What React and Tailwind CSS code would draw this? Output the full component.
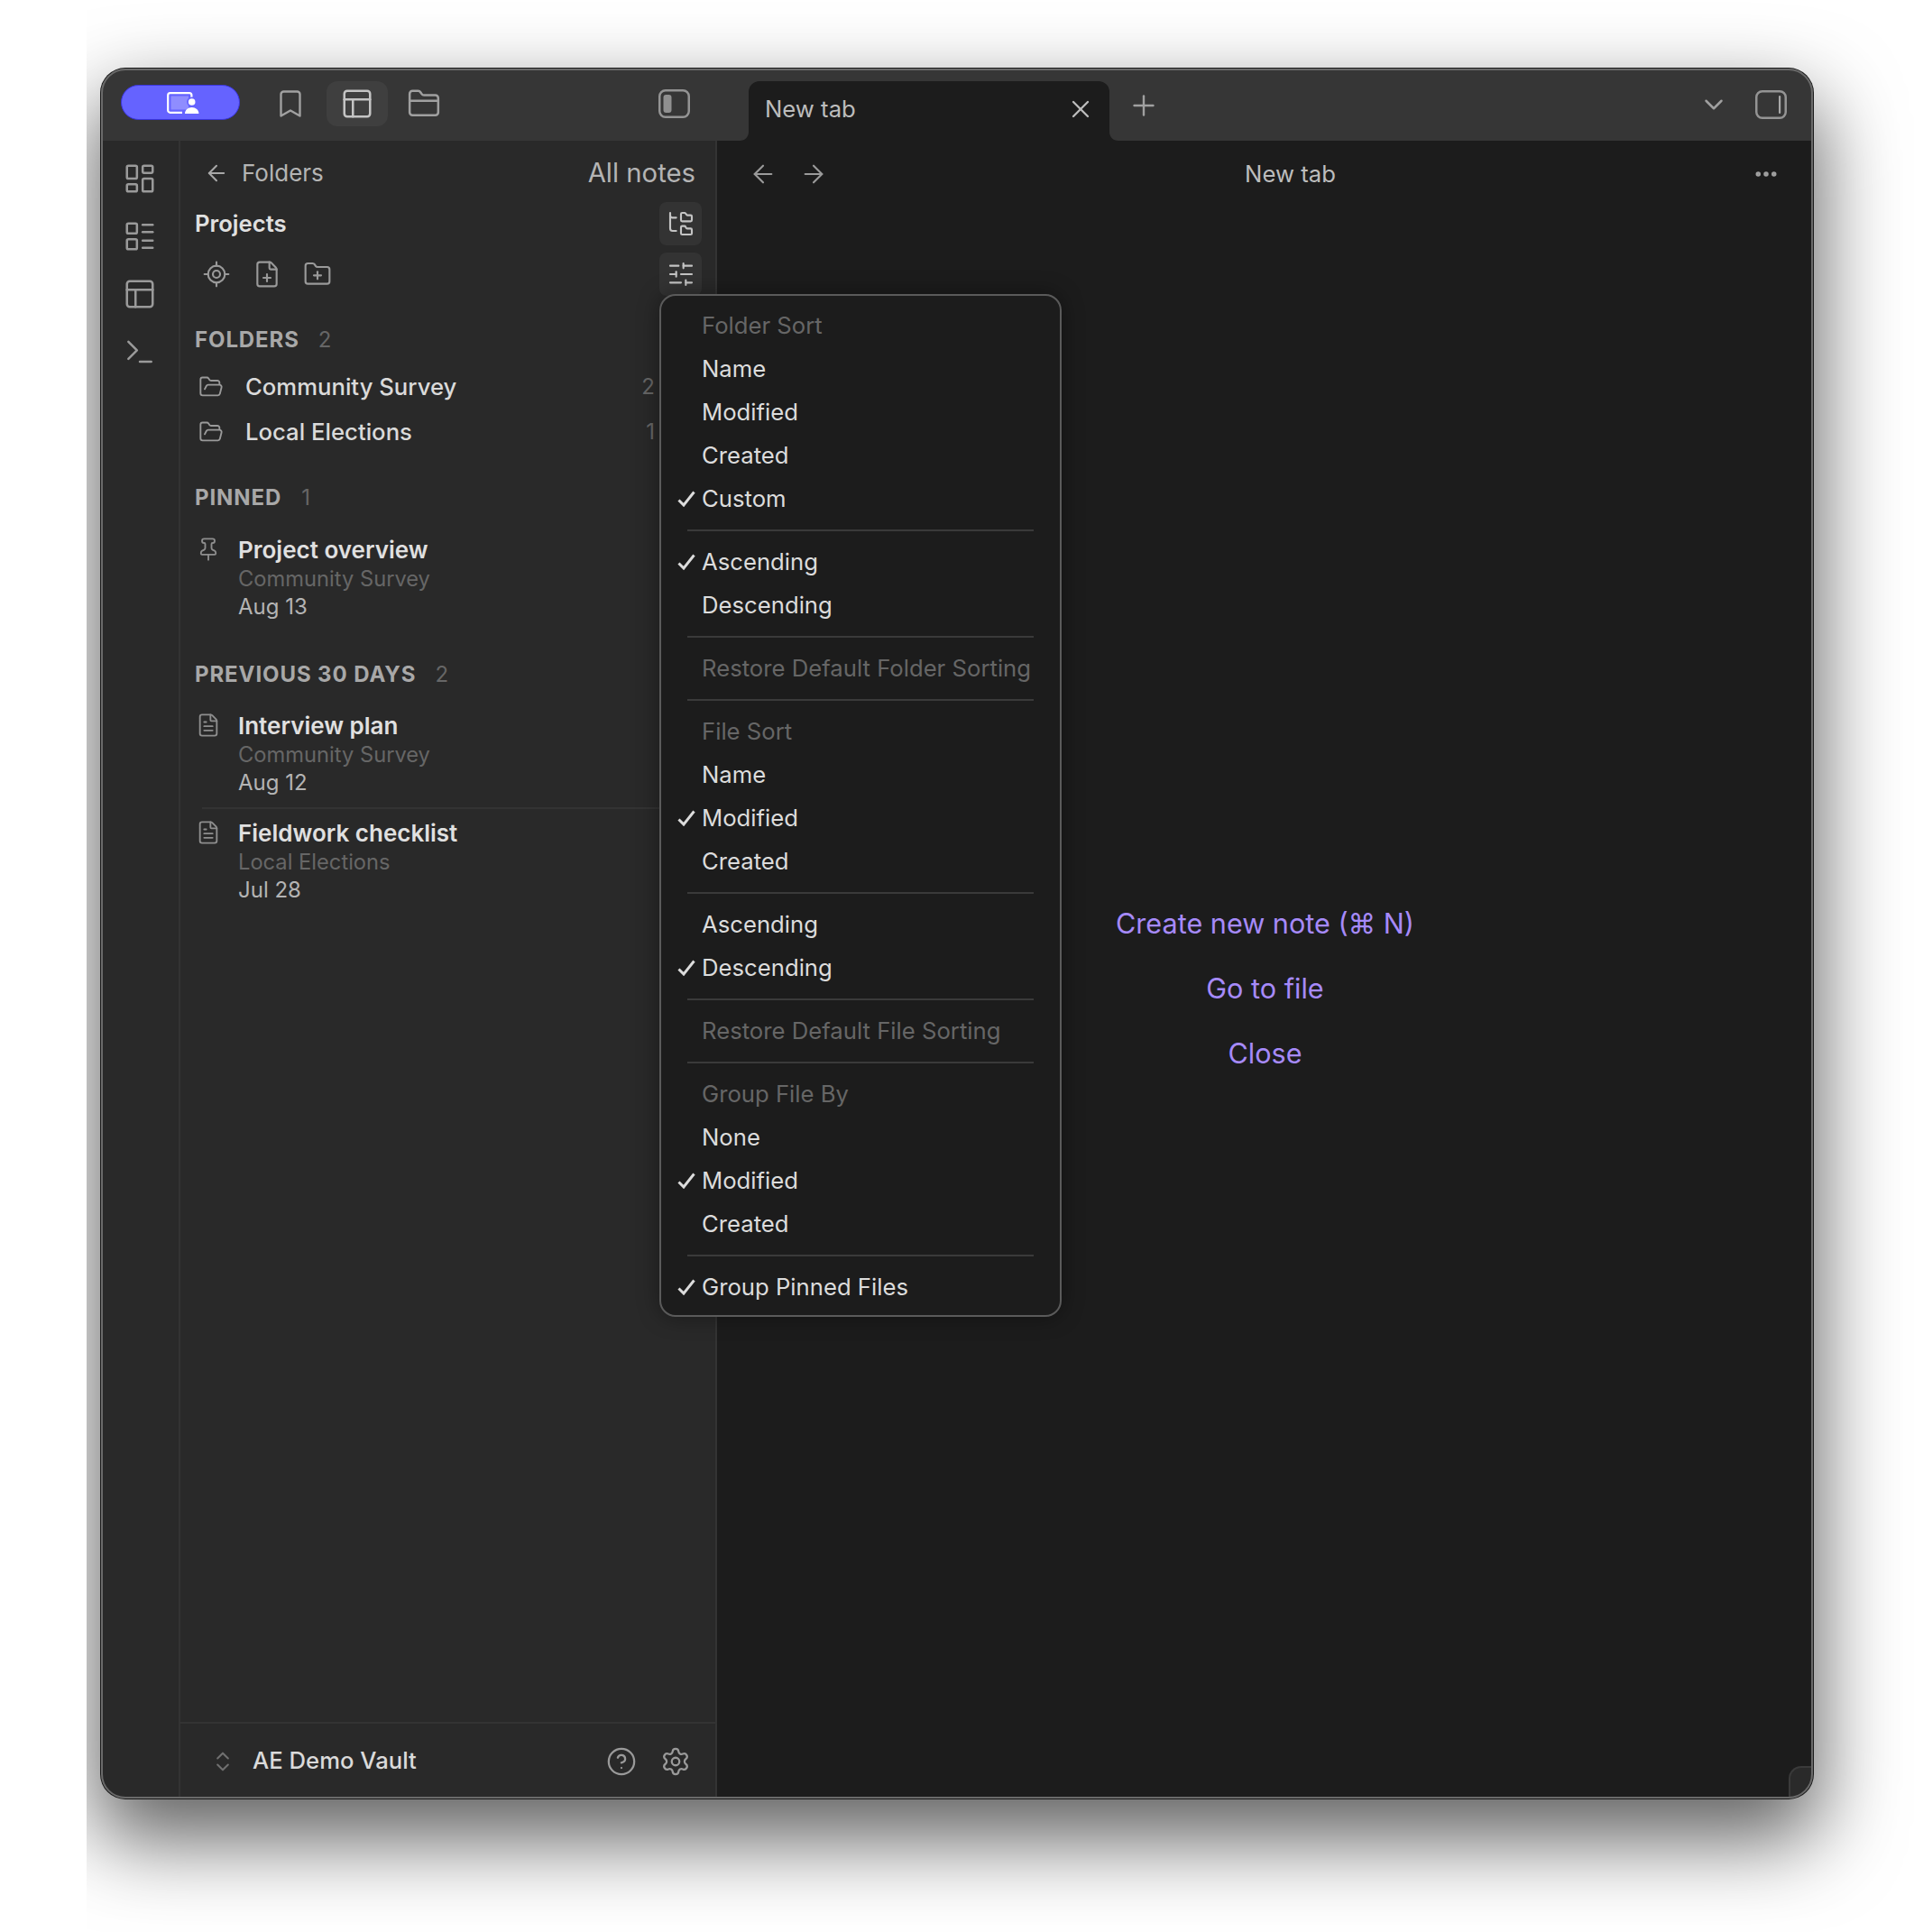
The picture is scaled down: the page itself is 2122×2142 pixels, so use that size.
import React from "react";
import {
  LayoutDashboard, LayoutList, PanelsTopLeft, Terminal, Bookmark, FolderClosed, ArrowLeft, ArrowRight,
  FolderTree, SlidersHorizontal, LocateFixed, FilePlus, FolderPlus, FolderOpen, Pin, FileText,
  ChevronsUpDown, CircleHelp, Settings, X, Plus, ChevronDown, Ellipsis,
} from "lucide-react";

const Sep = () => <div className="mx-[29px] my-[10px] h-[2px] bg-[#3a3a3a]" />;

function Row({ label, checked, muted }) {
  return (
    <div className={`relative flex h-[48px] items-center pl-[45px] text-[25.7px] ${muted ? "text-[#666666]" : "text-[#dcdcdc]"}`}>
      {checked && (
        <svg viewBox="0 0 20 18" className="absolute left-[18px] top-[15px] h-[18px] w-[20px]" fill="none">
          <path d="M1.5 10.5L7 16L18.5 1.5" stroke="#dcdcdc" strokeWidth="3" />
        </svg>
      )}
      {label}
    </div>
  );
}

function SectionLabel({ label, count, mt, gap }) {
  return (
    <div className={`flex h-[32px] items-center pl-[16px] ${mt}`}>
      <span className="text-[24px] font-bold tracking-[0.9px] text-[#a8a8a8]">{label}</span>
      <span className={`text-[24px] text-[#666666] ${gap}`}>{count}</span>
    </div>
  );
}

function FolderRow({ name, count }) {
  return (
    <div className="flex h-[50px] items-center pl-[20px] pr-[67px]">
      <FolderOpen className="h-[28px] w-[28px] text-[#9a9a9a]" strokeWidth={1.6} />
      <span className="ml-[24px] flex-1 text-[25.7px] font-medium text-[#dadada]">{name}</span>
      <span className="text-[24px] text-[#666666]">{count}</span>
    </div>
  );
}

function Note({ Icon, title, sub, date, pt, pb }) {
  return (
    <div className={`ml-[17px] flex ${pt} ${pb}`}>
      <div className="flex h-[34px] w-[47px] shrink-0 items-center">
        <Icon className="h-[28px] w-[28px] text-[#8e8e8e]" strokeWidth={1.6} />
      </div>
      <div className="min-w-0">
        <div className="flex h-[34px] items-center text-[26px] font-semibold text-[#e0e0e0]">{title}</div>
        <div className="flex h-[32px] items-center text-[23.7px] text-[#666666]">{sub}</div>
        <div className="flex h-[30px] items-center text-[24px] text-[#b4b4b4]">{date}</div>
      </div>
    </div>
  );
}

function PanelIcon({ right }) {
  return (
    <svg viewBox="0 0 35 32" className="h-[32px] w-[35px]" fill="none">
      <rect x="1.25" y="1.25" width="32.5" height="29.5" rx="6.5" stroke="#949494" strokeWidth="2.5" />
      {right ? (
        <rect x="26" y="6" width="2.2" height="20" rx="1.1" fill="#a8a8a8" />
      ) : (
        <rect x="5.5" y="6" width="9" height="20" rx="3" fill="#909090" />
      )}
    </svg>
  );
}

export default function App() {
  return (
    <div className="h-[2142px] w-[2122px] overflow-hidden bg-white font-['Inter',sans-serif]">
      <div className="ml-[96px] h-full overflow-hidden pl-[16px] pt-[76px]">
        <div className="relative flex h-[1918px] w-[1898px] flex-col rounded-[27px] bg-[#1c1c1c] shadow-[0_0_0_1px_#1a1a1a,0_40px_90px_6px_rgba(0,0,0,0.62)]">
          {/* title bar */}
          <div className="flex h-[80px] shrink-0 items-center overflow-hidden rounded-t-[27px] bg-[#363636]">
            <div className="flex h-full w-[682px] shrink-0 items-center pb-[2px]">
              <div className="ml-[22px] mb-[3px] flex h-[39px] w-[132px] items-center justify-center rounded-full border border-[#3a35e0] bg-[#6563ff] pl-[5px]">
                <svg viewBox="0 0 36 24" className="h-[24px] w-[36px]" fill="none">
                  <path d="M17 22.8H3.6A2.4 2.4 0 0 1 1.2 20.4V3.6A2.4 2.4 0 0 1 3.6 1.2H25a2.4 2.4 0 0 1 2.4 2.4V7" stroke="#fff" strokeWidth="2.2" />
                  <rect x="4.5" y="4.5" width="19.5" height="15" fill="#8f8dff" />
                  <circle cx="27.7" cy="11" r="5.6" fill="#6563ff" />
                  <circle cx="27.7" cy="11" r="3.8" fill="#fff" />
                  <path d="M20 24c0-4 3.4-7 7.7-7s7.7 3 7.7 7z" fill="#fff" />
                </svg>
              </div>
              <div className="ml-[34px] flex w-[44px] justify-center">
                <Bookmark className="h-[36px] w-[36px] text-[#a0a0a0]" strokeWidth={1.6} />
              </div>
              <div className="ml-[18px] flex h-[50px] w-[68px] items-center justify-center rounded-[12px] bg-[#3f3f3f]">
                <PanelsTopLeft className="h-[38px] w-[38px] text-[#c4c4c4]" strokeWidth={1.6} />
              </div>
              <div className="ml-[18px] flex w-[44px] justify-center">
                <FolderClosed className="h-[38px] w-[38px] text-[#a0a0a0]" strokeWidth={1.6} />
              </div>
              <div className="ml-auto mr-[29px]"><PanelIcon /></div>
            </div>
            <div className="relative ml-[36px] flex h-[66px] w-[400px] shrink-0 items-center self-end rounded-t-[12px] bg-[#1c1c1c] pb-[4px] pl-[18px] text-[25.7px] text-[#bcbcbc]">
              <svg viewBox="0 0 10 10" className="absolute bottom-0 left-[-10px] h-[10px] w-[10px]"><path d="M10 0V10H0C6 10 10 6 10 0Z" fill="#1c1c1c" /></svg>
              <svg viewBox="0 0 10 10" className="absolute bottom-0 right-[-10px] h-[10px] w-[10px]"><path d="M0 0V10H10C4 10 0 6 0 0Z" fill="#1c1c1c" /></svg>
              <span className="flex-1">New tab</span>
              <X className="mr-[16px] h-[32px] w-[32px] text-[#bcbcbc]" strokeWidth={1.75} />
            </div>
            <Plus className="ml-[20px] mt-[2px] h-[36px] w-[36px] text-[#a0a0a0]" strokeWidth={1.6} />
            <ChevronDown className="ml-auto h-[34px] w-[34px] text-[#a0a0a0]" strokeWidth={1.75} />
            <div className="ml-[29px] mr-[29px]"><PanelIcon right /></div>
          </div>

          {/* body */}
          <div className="flex min-h-0 flex-1">
            <div className="flex w-[88px] shrink-0 flex-col items-center overflow-hidden rounded-bl-[27px] border-r-2 border-[#333333] bg-[#292929] pt-[23px]">
              <LayoutDashboard className="h-[38px] w-[38px] text-[#9a9a9a]" strokeWidth={1.6} />
              <LayoutList className="mt-[26px] h-[38px] w-[38px] text-[#9a9a9a]" strokeWidth={1.6} />
              <PanelsTopLeft className="mt-[26px] h-[38px] w-[38px] text-[#9a9a9a]" strokeWidth={1.6} />
              <Terminal className="mt-[26px] h-[38px] w-[38px] text-[#9a9a9a]" strokeWidth={1.6} />
            </div>

            <div className="flex w-[595px] shrink-0 flex-col border-r-2 border-[#333333] bg-[#292929]">
              <div className="flex h-[68px] shrink-0 items-start pt-[22px]">
                <ArrowLeft className="ml-[26px] h-[28px] w-[28px] text-[#a8a8a8]" strokeWidth={1.75} />
                <span className="ml-[14px] text-[26px] leading-[28px] text-[#b4b4b4]">Folders</span>
                <span className="ml-auto mr-[22px] text-[29.3px] leading-[28px] text-[#b4b4b4]">All notes</span>
              </div>
              <div className="flex h-[48px] shrink-0 items-center pl-[16px] pr-[15px]">
                <span className="flex-1 text-[25.7px] font-semibold text-[#e0e0e0]">Projects</span>
                <div className="flex h-[48px] w-[47px] items-center justify-center rounded-[8px] bg-[#333333]">
                  <FolderTree className="h-[32px] w-[32px] text-[#c4c4c4]" strokeWidth={1.6} />
                </div>
              </div>
              <div className="mt-[8px] flex h-[48px] shrink-0 items-center pl-[24px] pr-[15px]">
                <LocateFixed className="h-[32px] w-[32px] text-[#9a9a9a]" strokeWidth={1.6} />
                <FilePlus className="ml-[24px] h-[32px] w-[32px] text-[#9a9a9a]" strokeWidth={1.6} />
                <FolderPlus className="ml-[24px] h-[32px] w-[32px] text-[#9a9a9a]" strokeWidth={1.6} />
                <div className="ml-auto flex h-[48px] w-[47px] items-center justify-center rounded-[8px] bg-[#333333]">
                  <SlidersHorizontal className="h-[32px] w-[32px] text-[#c4c4c4]" strokeWidth={1.6} />
                </div>
              </div>

              <SectionLabel label="FOLDERS" count="2" mt="mt-[33px]" gap="ml-[21px]" />
              <div className="mt-[11px]">
                <FolderRow name="Community Survey" count="2" />
                <FolderRow name="Local Elections" count="1" />
              </div>

              <SectionLabel label="PINNED" count="1" mt="mt-[32px]" gap="ml-[22px]" />
              <Note Icon={Pin} title="Project overview" sub="Community Survey" date="Aug 13" pt="pt-[24px]" pb="" />

              <SectionLabel label="PREVIOUS 30 DAYS" count="2" mt="mt-[44px]" gap="ml-[21px]" />
              <Note Icon={FileText} title="Interview plan" sub="Community Survey" date="Aug 12" pt="pt-[23px]" pb="pb-[12px]" />
              <div className="ml-[24px] h-[2px] shrink-0 bg-[#333333]" />
              <Note Icon={FileText} title="Fieldwork checklist" sub="Local Elections" date="Jul 28" pt="pt-[9px]" pb="" />

              <div className="mt-auto flex h-[85px] shrink-0 items-center border-t-2 border-[#333333] pl-[33px] pr-[27px]">
                <ChevronsUpDown className="h-[28px] w-[28px] text-[#707070]" strokeWidth={1.75} />
                <span className="ml-[19px] flex-1 text-[25.7px] font-medium text-[#dadada]">AE Demo Vault</span>
                <CircleHelp className="h-[34px] w-[34px] text-[#9a9a9a]" strokeWidth={1.6} />
                <Settings className="ml-[26px] h-[34px] w-[34px] text-[#9a9a9a]" strokeWidth={1.6} />
              </div>
            </div>

            <div className="flex min-w-0 flex-1 flex-col">
              <div className="flex h-[74px] shrink-0 items-center">
                <div className="flex w-[160px] items-center pl-[35px]">
                  <ArrowLeft className="h-[32px] w-[32px] text-[#9a9a9a]" strokeWidth={1.6} />
                  <ArrowRight className="ml-[24px] h-[32px] w-[32px] text-[#9a9a9a]" strokeWidth={1.6} />
                </div>
                <div className="flex-1 text-center text-[25.7px] text-[#bcbcbc]">New tab</div>
                <div className="flex w-[104px] justify-center">
                  <Ellipsis className="h-[30px] w-[30px] text-[#a0a0a0]" strokeWidth={2.4} />
                </div>
              </div>
              <div className="mt-[772px] flex flex-col items-center gap-[28px] text-[30.6px] leading-[44px] text-[#a68af9]">
                <div>Create new note (⌘ N)</div>
                <div>Go to file</div>
                <div>Close</div>
              </div>
            </div>
          </div>

          {/* dropdown menu */}
          <div className="absolute left-[619px] top-[250px] w-[446px] rounded-[18px] border-2 border-[#5a5a5a] bg-[#1c1c1c] pb-[7px] pt-[9px] shadow-[0_0_24px_rgba(0,0,0,0.4)]">
            <Row label="Folder Sort" muted />
            <Row label="Name" />
            <Row label="Modified" />
            <Row label="Created" />
            <Row label="Custom" checked />
            <Sep />
            <Row label="Ascending" checked />
            <Row label="Descending" />
            <Sep />
            <Row label="Restore Default Folder Sorting" muted />
            <Sep />
            <Row label="File Sort" muted />
            <Row label="Name" />
            <Row label="Modified" checked />
            <Row label="Created" />
            <Sep />
            <Row label="Ascending" />
            <Row label="Descending" checked />
            <Sep />
            <Row label="Restore Default File Sorting" muted />
            <Sep />
            <Row label="Group File By" muted />
            <Row label="None" />
            <Row label="Modified" checked />
            <Row label="Created" />
            <Sep />
            <Row label="Group Pinned Files" checked />
          </div>

          {/* resize grip */}
          <div className="absolute bottom-0 right-0 h-[36px] w-[27px] rounded-tl-[14px] rounded-br-[27px] border-l-2 border-t-2 border-[#3a3a3a] bg-[#2a2a2a]" />
          {/* window edge */}
          <div className="pointer-events-none absolute inset-0 rounded-[27px] border-2 border-[#6a6a6a]" />
        </div>
      </div>
    </div>
  );
}
